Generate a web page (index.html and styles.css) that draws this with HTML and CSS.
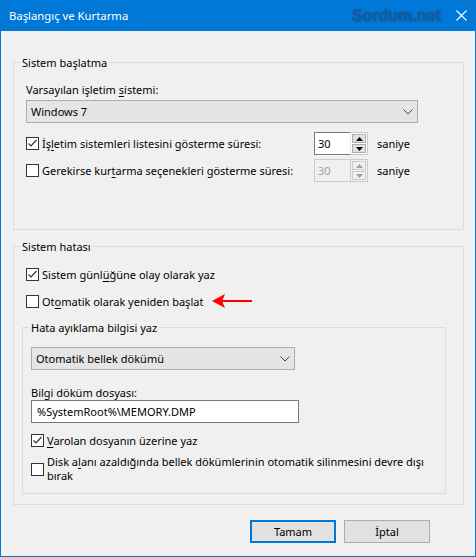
FILE: index.html
```html
<!DOCTYPE html>
<html lang="tr">
<head>
<meta charset="utf-8">
<title>Başlangıç ve Kurtarma</title>
<link rel="stylesheet" href="styles.css">
</head>
<body>
<div class="window">
  <div class="titlebar">
    <span class="title">Başlangıç ve Kurtarma</span>
    <span class="watermark">Sordum.net</span>
    <svg class="close" width="11" height="11" viewBox="0 0 11 11"><path d="M0.5 0.5 L10.5 10.5 M10.5 0.5 L0.5 10.5" stroke="#fff" stroke-width="1.1" fill="none"/></svg>
  </div>

  <div class="body">
    <fieldset class="group group-start">
      <legend>Sistem başlatma</legend>
      <div class="label label-os">Varsayılan işletim <u>s</u>istemi:</div>
      <div class="select select-os">
        <span>Windows 7</span>
        <svg class="chev" width="10" height="6" viewBox="0 0 10 6"><polyline points="0.5,0.5 5,5 9.5,0.5" fill="none" stroke="#444" stroke-width="1"/></svg>
      </div>

      <div class="trow trow-first">
        <div class="check">
          <span class="box"><svg width="11" height="11" viewBox="0 0 11 11"><polyline points="1.5,5.5 4,8 9.5,2" fill="none" stroke="#333" stroke-width="1.2"/></svg></span>
          <span>İş<u>l</u>etim sistemleri listesini gösterme süresi:</span>
        </div>
        <div class="spin">
          <span class="spin-value">30</span>
          <span class="spin-btns">
            <span class="sbtn"><svg width="7" height="4" viewBox="0 0 7 4"><polygon points="0,4 7,4 3.5,0" fill="#000"/></svg></span>
            <span class="sbtn"><svg width="7" height="4" viewBox="0 0 7 4"><polygon points="0,0 7,0 3.5,4" fill="#000"/></svg></span>
          </span>
        </div>
        <span class="unit">saniye</span>
      </div>

      <div class="trow trow-second">
        <div class="check">
          <span class="box"></span>
          <span>Gerekirse kur<u>t</u>arma seçenekleri gösterme süresi:</span>
        </div>
        <div class="spin spin-disabled">
          <span class="spin-value">30</span>
          <span class="spin-btns">
            <span class="sbtn"><svg width="7" height="4" viewBox="0 0 7 4"><polygon points="0,4 7,4 3.5,0" fill="#a0a0a0"/></svg></span>
            <span class="sbtn"><svg width="7" height="4" viewBox="0 0 7 4"><polygon points="0,0 7,0 3.5,4" fill="#a0a0a0"/></svg></span>
          </span>
        </div>
        <span class="unit">saniye</span>
      </div>
    </fieldset>

    <fieldset class="group group-error">
      <legend>Sistem hatası</legend>
      <div class="check row-log">
        <span class="box"><svg width="11" height="11" viewBox="0 0 11 11"><polyline points="1.5,5.5 4,8 9.5,2" fill="none" stroke="#333" stroke-width="1.2"/></svg></span>
        <span>Sistem günl<u>ü</u>ğüne olay olarak yaz</span>
      </div>
      <div class="check row-restart">
        <span class="box"></span>
        <span>Ot<u>o</u>matik olarak yeniden başlat</span>
        <svg class="arrow" width="41" height="16" viewBox="0 0 41 16"><polygon points="0,8 13,1 10.5,7 40,7 40,9 10.5,9 13,15" fill="#f00"/></svg>
      </div>

      <fieldset class="group group-debug">
        <legend>Hata ayıklama bilgisi yaz</legend>
        <div class="select select-dump">
          <span>Otomatik bellek dökümü</span>
          <svg class="chev" width="10" height="6" viewBox="0 0 10 6"><polyline points="0.5,0.5 5,5 9.5,0.5" fill="none" stroke="#444" stroke-width="1"/></svg>
        </div>
        <div class="label label-file">Bilgi döküm dosyası:</div>
        <div class="textbox">%SystemRoot%\MEMORY.DMP</div>
        <div class="check row-overwrite">
          <span class="box"><svg width="11" height="11" viewBox="0 0 11 11"><polyline points="1.5,5.5 4,8 9.5,2" fill="none" stroke="#333" stroke-width="1.2"/></svg></span>
          <span><u>V</u>arolan dosyanın üzerine yaz</span>
        </div>
        <div class="check row-disk">
          <span class="box"></span>
          <span class="wrap">
            <span class="line">Disk a<u>l</u>anı azaldığında bellek dökümlerinin otomatik silinmesini devre dışı</span>
            <span class="line">bırak</span>
          </span>
        </div>
      </fieldset>
    </fieldset>

    <div class="buttons">
      <button class="btn btn-default">Tamam</button>
      <button class="btn">İptal</button>
    </div>
  </div>
</div>
</body>
</html>
```

FILE: styles.css
```css
* { box-sizing: border-box; }

body {
  margin: 0;
  font-family: "Noto Sans", "Open Sans", sans-serif;
  font-size: 11px;
  color: #000;
  background: #f0f0f0;
}

u { text-decoration: underline; text-underline-offset: 2px; }

.window {
  width: 476px;
  height: 557px;
  background: #f0f0f0;
  border: 1px solid #0078d7;
  border-top: 0;
  display: flex;
  flex-direction: column;
}

.titlebar {
  height: 31px;
  flex: none;
  background: #0078d7;
  color: #fff;
  display: flex;
  align-items: center;
  padding-left: 8px;
}

.title { flex: 1; line-height: 16px; font-size: 11.3px; }

.watermark {
  font-family: "Liberation Sans", Arial, sans-serif;
  font-weight: bold;
  font-size: 16px;
  color: #1a5a9b;
  text-shadow: 0 0 2px rgba(10, 50, 110, 0.55);
  margin-right: 15px;
}

.close { margin-right: 8px; }

.body { display: flex; flex-direction: column; }

.group {
  margin: 0;
  border: 1px solid #dcdcdc;
  min-width: 0;
}

.group legend {
  line-height: 15px;
  padding: 0 2px;
}

.group-start {
  width: 451px;
  margin: 24px 0 0 12px;
  padding: 0 12px 47px 12px;
}
.group-start legend { margin-left: -6px; }

.group-error {
  width: 451px;
  margin: 9px 0 0 12px;
  padding: 0 8px 10px 8px;
}
.group-error legend { margin-left: -2px; }

.group-debug {
  width: 424px;
  margin: 11px 0 0 0;
  padding: 0 8px 10px 8px;
}
.group-debug legend { margin-left: -2px; }

.label { line-height: 15px; }
.label-os { margin-top: 12px; }
.label-file { margin-top: 15px; }

.select {
  height: 23px;
  background: #e5e5e5;
  border: 1px solid #adadad;
  display: flex;
  align-items: center;
  justify-content: space-between;
  padding: 0 4px 0 4px;
}
.select-os { margin-top: 3px; width: 392px; }
.select-dump { margin-top: 12px; width: 264px; }

.textbox {
  height: 23px;
  width: 268px;
  background: #fff;
  border: 1px solid #7a7a7a;
  display: flex;
  align-items: center;
  padding-left: 5px;
}

.check {
  display: flex;
  align-items: center;
  line-height: 15px;
  white-space: nowrap;
}
.check .box {
  flex: none;
  width: 13px;
  height: 13px;
  border: 1px solid #333;
  background: #fff;
  margin-right: 3px;
  display: flex;
  align-items: center;
  justify-content: center;
}

.trow {
  height: 23px;
  display: grid;
  grid-template-columns: 288px 54px auto;
  align-items: center;
}
.trow-first { margin-top: 9px; }
.trow-second { margin-top: 4px; }

.spin {
  height: 23px;
  display: flex;
}
.spin-value {
  width: 36px;
  height: 23px;
  background: #fff;
  border: 1px solid #7a7a7a;
  border-right: 0;
  display: flex;
  align-items: center;
  padding-left: 3px;
}
.spin-btns {
  width: 18px;
  height: 23px;
  border: 1px solid #c8c8c8;
  border-left: 1px solid #e8e8e8;
  background: #fff;
  display: flex;
  flex-direction: column;
  padding: 1px 1px;
  gap: 1px;
}
.sbtn {
  flex: 1;
  background: #e1e1e1;
  border: 1px solid #adadad;
  display: flex;
  align-items: center;
  justify-content: center;
}
.spin-disabled .spin-value {
  background: #f0f0f0;
  border-color: #cccccc;
  color: #a0a0a0;
}
.spin-disabled .spin-btns { background: #f0f0f0; border-color: #cccccc; }
.spin-disabled .sbtn { background: #f0f0f0; border-color: #cccccc; }

.unit { margin-left: 9px; }

.row-log { margin-top: 13px; margin-left: 4px; }
.row-restart { margin-top: 11px; margin-left: 4px; }
.arrow { margin-left: 9px; flex: none; }

.row-overwrite { margin-top: 10px; }
.row-disk { margin-top: 7px; align-items: center; }
.row-disk .wrap { display: flex; flex-direction: column; }
.row-disk .line { display: block; line-height: 14px; }

.buttons {
  margin-top: 15px;
  display: flex;
  justify-content: flex-end;
  gap: 8px;
  padding-right: 45px;
}
.btn {
  width: 86px;
  height: 23px;
  font-family: inherit;
  font-size: 11px;
  color: #000;
  background: #e1e1e1;
  border: 1px solid #adadad;
  padding: 0;
}
.btn-default { border: 2px solid #0078d7; }
```
